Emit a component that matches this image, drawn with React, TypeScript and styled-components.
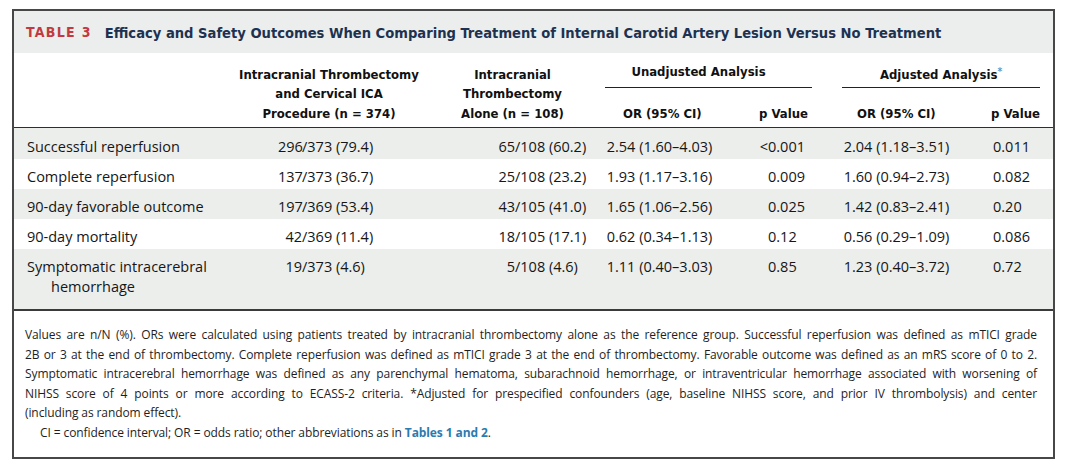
import styled, { createGlobalStyle } from 'styled-components';

const BODY_FONT = '"Open Sans", "Liberation Sans", sans-serif';
const HEAD_FONT = '"DejaVu Sans Condensed", "DejaVu Sans", "Liberation Sans", sans-serif';

const GRID = '224px 182px 185px 140px 67px 30px 133px 65px 13px';

// 표 본문 데이터
const ROWS = [
  { label: ['Successful reperfusion'], a: ['296', '/373 (79.4)'], b: ['65', '/108 (60.2)'], or1: ['2', '.54 (1.60–4.03)'], p1: ['<', '0.001'], or2: ['2', '.04 (1.18–3.51)'], p2: '0.011' },
  { label: ['Complete reperfusion'], a: ['137', '/373 (36.7)'], b: ['25', '/108 (23.2)'], or1: ['1', '.93 (1.17–3.16)'], p1: ['', '0.009'], or2: ['1', '.60 (0.94–2.73)'], p2: '0.082' },
  { label: ['90-day favorable outcome'], a: ['197', '/369 (53.4)'], b: ['43', '/105 (41.0)'], or1: ['1', '.65 (1.06–2.56)'], p1: ['', '0.025'], or2: ['1', '.42 (0.83–2.41)'], p2: '0.20' },
  { label: ['90-day mortality'], a: ['42', '/369 (11.4)'], b: ['18', '/105 (17.1)'], or1: ['0', '.62 (0.34–1.13)'], p1: ['', '0.12'], or2: ['0', '.56 (0.29–1.09)'], p2: '0.086' },
  { label: ['Symptomatic intracerebral', 'hemorrhage'], a: ['19', '/373 (4.6)'], b: ['5', '/108 (4.6)'], or1: ['1', '.11 (0.40–3.03)'], p1: ['', '0.85'], or2: ['1', '.23 (0.40–3.72)'], p2: '0.72' },
];

// 각주 줄 (원본과 같은 위치에서 줄바꿈)
const NOTE_LINES = [
  'Values are n/N (%). ORs were calculated using patients treated by intracranial thrombectomy alone as the reference group. Successful reperfusion was defined as mTICI grade',
  '2B or 3 at the end of thrombectomy. Complete reperfusion was defined as mTICI grade 3 at the end of thrombectomy. Favorable outcome was defined as an mRS score of 0 to 2.',
  'Symptomatic intracerebral hemorrhage was defined as any parenchymal hematoma, subarachnoid hemorrhage, or intraventricular hemorrhage associated with worsening of',
  'NIHSS score of 4 points or more according to ECASS-2 criteria. *Adjusted for prespecified confounders (age, baseline NIHSS score, and prior IV thrombolysis) and center',
];

function Aligned({ lead, rest, lw, pl }: { lead: string; rest: string; lw: number; pl: number }) {
  return (
    <Cell $pl={pl}>
      <Lead $w={lw}>{lead}</Lead>
      <span>{rest}</span>
    </Cell>
  );
}

export default function App() {
  return (
    <Page>
      <GlobalStyle />
      <Box>
        <TitleBar>
          <TableNo>TABLE 3</TableNo>
          <TitleText>
            Efficacy and Safety Outcomes When Comparing Treatment of Internal Carotid Artery Lesion Versus No Treatment
          </TitleText>
        </TitleBar>

        {/* 헤더 */}
        <Header>
          <GroupCol $col={2}>
            Intracranial Thrombectomy
            <br />
            and Cervical ICA
            <br />
            Procedure (n = 374)
          </GroupCol>
          <GroupCol $col={3}>
            Intracranial
            <br />
            Thrombectomy
            <br />
            Alone (n = 108)
          </GroupCol>
          <Group $col="4 / 6" $shift={20}>
            Unadjusted Analysis
          </Group>
          <Group $col="7 / 9" $shift={0}>
            Adjusted Analysis<Star>*</Star>
          </Group>
          <SubHead $col={4} $align="left" $pad="0 0 0 18px">
            OR (95% CI)
          </SubHead>
          <SubHead $col={5} $align="right" $pad="0 4px 0 0">
            p Value
          </SubHead>
          <SubHead $col={7} $align="left" $pad="0 0 0 15px">
            OR (95% CI)
          </SubHead>
          <SubHead $col={8} $align="right" $pad="0">
            p Value
          </SubHead>
        </Header>

        {/* 본문 */}
        <Body>
          {ROWS.map((row, i) => (
            <Row key={row.label[0]} $odd={i % 2 === 0} $first={i === 0} $last={i === ROWS.length - 1}>
              <Label>
                {row.label[0]}
                {row.label[1] && <Wrap>{row.label[1]}</Wrap>}
              </Label>
              <Aligned lead={row.a[0]} rest={row.a[1]} lw={24} pl={40} />
              <Aligned lead={row.b[0]} rest={row.b[1]} lw={24} pl={71} />
              <Aligned lead={row.or1[0]} rest={row.or1[1]} lw={10} pl={0} />
              <Aligned lead={row.p1[0]} rest={row.p1[1]} lw={23} pl={0} />
              <span />
              <Aligned lead={row.or2[0]} rest={row.or2[1]} lw={10} pl={0} />
              <Aligned lead="" rest={row.p2} lw={18} pl={0} />
              <span />
            </Row>
          ))}
        </Body>

        {/* 각주 */}
        <Notes>
          {NOTE_LINES.map((line) => (
            <NoteLine key={line}>{line}</NoteLine>
          ))}
          <NoteLine $last>(including as random effect).</NoteLine>
          <NoteLine $last $indent>
            CI = confidence interval; OR = odds ratio; other abbreviations as in <RefLink>Tables 1 and 2</RefLink>.
          </NoteLine>
        </Notes>
      </Box>
    </Page>
  );
}

const GlobalStyle = createGlobalStyle`
  html, body {
    margin: 0;
    padding: 0;
    background: #ffffff;
  }
`;

const Page = styled.div`
  width: 1080px;
  height: 471px;
  padding: 9px 0 0 12px;
  box-sizing: border-box;
  font-family: ${BODY_FONT};
  color: #161616;
`;

const Box = styled.div`
  width: 1043px;
  border: 2px solid #474747;
  box-sizing: border-box;
  display: flex;
  flex-direction: column;
`;

const TitleBar = styled.div`
  height: 42px;
  background: #eceeed;
  display: flex;
  align-items: center;
  padding: 0 12px;
  gap: 13px;
  white-space: nowrap;
`;

const TableNo = styled.span`
  font-family: ${HEAD_FONT};
  font-weight: 700;
  font-size: 14px;
  letter-spacing: 1.3px;
  color: #c23a40;
`;

const TitleText = styled.span`
  font-family: ${HEAD_FONT};
  font-weight: 700;
  font-size: 14.6px;
  color: #1d3250;
`;

const Header = styled.div`
  display: grid;
  grid-template-columns: ${GRID};
  grid-template-rows: auto auto;
  padding: 9px 0 4px;
  border-bottom: 1.5px solid #2e2e2e;
  font-family: ${HEAD_FONT};
  font-weight: 700;
  font-size: 13px;
  line-height: 19.5px;
  color: #111;
  white-space: nowrap;
`;

const GroupCol = styled.div<{ $col: number }>`
  grid-column: ${(p) => p.$col};
  grid-row: 1 / 3;
  align-self: end;
  text-align: center;
`;

const Group = styled.div<{ $col: string; $shift: number }>`
  grid-column: ${(p) => p.$col};
  grid-row: 1;
  text-align: center;
  padding: 0 ${(p) => p.$shift}px 2px 0;
  border-bottom: 1.5px solid #222;
`;

const Star = styled.span`
  color: #5a9cc8;
  font-size: 10px;
  vertical-align: 4px;
`;

const SubHead = styled.div<{ $col: number; $align: string; $pad: string }>`
  grid-column: ${(p) => p.$col};
  grid-row: 2;
  text-align: ${(p) => p.$align};
  padding: ${(p) => p.$pad};
  margin-top: 16px;
`;

const Body = styled.div`
  display: flex;
  flex-direction: column;
  border-bottom: 2px solid #3a3a3a;
`;

const Row = styled.div<{ $odd: boolean; $first: boolean; $last: boolean }>`
  display: grid;
  grid-template-columns: ${GRID};
  background: ${(p) => (p.$odd ? '#eceeec' : '#ffffff')};
  padding: ${(p) => (p.$first ? '9px' : '8px')} 0 ${(p) => (p.$last ? '12px' : '2px')};
  font-size: 14.5px;
  line-height: 20px;
  white-space: nowrap;
`;

const Label = styled.div`
  padding-left: 13px;
`;

const Wrap = styled.div`
  padding-left: 24px;
`;

const Cell = styled.div<{ $pl: number }>`
  display: flex;
  padding-left: ${(p) => p.$pl}px;
`;

const Lead = styled.span<{ $w: number }>`
  display: inline-block;
  width: ${(p) => p.$w}px;
  text-align: right;
  flex-shrink: 0;
`;

const Notes = styled.div`
  padding: 14px 16px 15px 11px;
  font-size: 12px;
  letter-spacing: -0.1px;
  line-height: 19.5px;
  color: #1e1e1e;
`;

const NoteLine = styled.div<{ $last?: boolean; $indent?: boolean }>`
  text-align: justify;
  text-align-last: ${(p) => (p.$last ? 'left' : 'justify')};
  padding-left: ${(p) => (p.$indent ? '15px' : '0')};
  white-space: nowrap;
`;

const RefLink = styled.span`
  color: #2b7bb0;
  font-weight: 700;
`;
